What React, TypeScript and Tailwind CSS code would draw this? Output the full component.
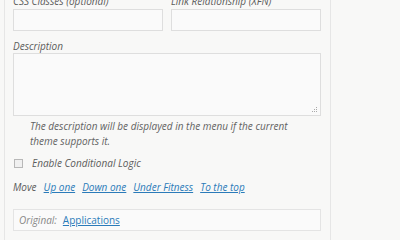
import React from 'react';

const App: React.FC = () => {
  const font = { fontFamily: '"Open Sans", "DejaVu Sans", sans-serif' };

  return (
    <div
      className="w-[400px] h-[240px] overflow-hidden bg-[#f8f8f7] flex text-[10px] italic text-[#5c5c5c]"
      style={font}
    >
      <div className="w-[4px] shrink-0" />

      {/* Menu item panel */}
      <div className="w-[327px] shrink-0 border-x border-[#e6e6e6] pl-[8px] pr-[8px] flex flex-col">
        {/* CSS classes / XFN */}
        <div className="flex gap-[8px] mt-[-6px]">
          <div className="w-[150px] flex flex-col">
            <span className="h-[15px] leading-[15px]">CSS Classes (optional)</span>
            <div className="h-[22px] border border-[#dedede] bg-[#fafafa]" />
          </div>
          <div className="w-[150px] flex flex-col">
            <span className="h-[15px] leading-[15px]">Link Relationship (XFN)</span>
            <div className="h-[22px] border border-[#dedede] bg-[#fafafa]" />
          </div>
        </div>

        {/* Description */}
        <span className="mt-[8px] h-[14px] leading-[14px]">Description</span>
        <div className="relative w-[308px] h-[63px] border border-[#dedede] bg-[#fafafa]">
          <svg className="absolute right-[2px] bottom-[2px]" width="6" height="6" viewBox="0 0 6 6">
            <rect x="4" y="0" width="1" height="1" fill="#aaa" />
            <rect x="2" y="2" width="1" height="1" fill="#aaa" />
            <rect x="4" y="2" width="1" height="1" fill="#aaa" />
            <rect x="0" y="4" width="1" height="1" fill="#aaa" />
            <rect x="2" y="4" width="1" height="1" fill="#aaa" />
            <rect x="4" y="4" width="1" height="1" fill="#aaa" />
          </svg>
        </div>
        <p className="mt-[3px] pl-[17px] leading-[15px] text-[#626262]">
          The description will be displayed in the menu if the current
          <br />
          theme supports it.
        </p>

        {/* Conditional logic */}
        <label className="mt-[6px] flex items-center h-[16px] gap-[9px]">
          <span className="ml-[1px] w-[9px] h-[9px] border border-[#b8b8b8] bg-[#f0f0f0]" />
          <span>Enable Conditional Logic</span>
        </label>

        {/* Move */}
        <div className="mt-[8px] flex items-center h-[16px] gap-[7px]">
          <span>Move</span>
          <a className="text-[#2b7bb9] underline">Up one</a>
          <a className="text-[#2b7bb9] underline">Down one</a>
          <a className="text-[#2b7bb9] underline">Under Fitness</a>
          <a className="text-[#2b7bb9] underline">To the top</a>
        </div>

        {/* Original */}
        <div className="mt-[14px] w-[308px] h-[22px] border border-[#e4e4e4] bg-[#fafafa] flex items-center px-[5px] gap-[6px]">
          <span className="text-[#888]">Original:</span>
          <a className="not-italic text-[#2b7bb9] underline">Applications</a>
        </div>
      </div>

      <div className="flex-1" />
    </div>
  );
};

export default App;
